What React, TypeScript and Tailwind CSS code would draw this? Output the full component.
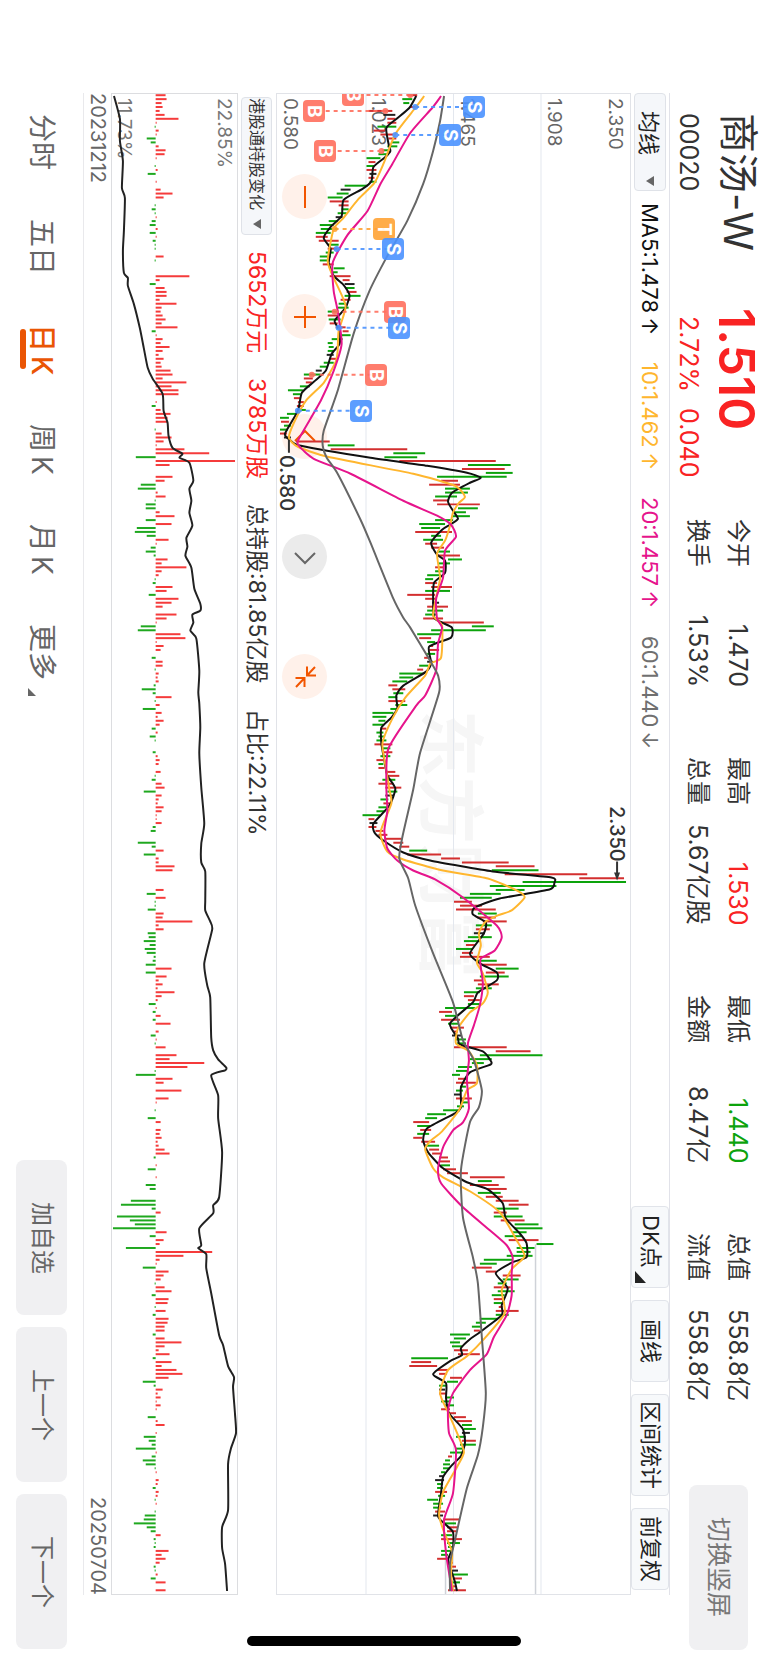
import React, { useState } from 'react';

// K线数据: 颜色 + 最低/最高
const candleData = `
r131,141 g126,136 g127,133 r134,142 r92,116 k107,119 r111,119 r111,120 g101,120 r97,109
r104,117 r112,120 g115,123 g111,121 g106,112 g102,111 g90,104 r92,99 g90,98 r90,100
k93,100 r92,98 g93,100 g68,91 k64,74 g60,72 g51,66 r53,72 r62,72 g65,72
g61,70 k59,66 g52,61 g43,57 g44,61 g39,54 r39,51 r42,62 g51,62 r51,61
g49,57 g43,54 g43,53 r46,57 g57,68 g54,61 r53,74 r66,73 k68,78 g69,78
r70,80 g68,84 r64,74 g62,69 g61,72 g51,62 r51,61 g52,64 r53,61 r59,69
r66,72 g64,74 g55,66 g51,56 g52,57 g51,57 k50,57 r53,61 g47,57 g43,51
k39,45 g27,44 r27,36 r29,35 g23,33 g11,26 g16,24 r17,23 r21,27 r20,27
g20,29 g10,19 g3,12 r4,12 g7,14 g3,11 r3,10 k7,14 r19,53 g51,78
r54,131 g117,149 g108,141 r123,220 g192,235 r186,229 g210,237 g161,231 r165,182 r153,184
g169,194 g169,192 g159,181 r157,172 r161,204 g182,202 g177,190 g176,194 g159,177 g143,169
g145,164 r139,176 g155,165 g147,167 r149,161 r155,168 g161,174 r162,184 g172,186 g162,174
r159,167 g159,167 g151,165 g149,157 r149,161 r155,176 g149,174 r131,159 r149,161 k156,163
r151,172 g151,167 g149,161 r147,167 r164,208 g196,218 g155,210 g141,165 r143,155 g151,159
r153,157 r153,163 g151,159 r148,154 k151,157 g143,152 r141,147 g123,147 g123,137 g116,131
r112,121 r116,129 g117,127 g112,121 r112,129 g119,131 g114,121 g96,117 g96,110 g102,109
g96,107 r104,110 g100,107 g102,108 g100,110 r98,116 g106,114 r107,116 g104,114 r100,107
g102,107 r102,108 r109,119 r110,123 g106,119 r102,117 r109,125 g111,121 k109,117 g104,112
r107,114 g102,111 g100,109 g86,104 r92,98 k93,101 r92,100 r99,107 r102,111 r108,125
r117,127 r123,133 g133,151 r131,165 r165,184 r186,233 r220,259 g216,263 r229,312 r304,349
g247,351 g214,281 g220,249 g194,225 g184,216 r178,196 r184,206 r180,220 g202,221 r201,220
r207,231 g200,216 r200,214 k198,209 g192,216 g188,204 r190,199 g180,197 r186,197 r184,214
g201,221 r206,231 g220,243 r210,229 g204,233 r198,207 r202,223 g200,216 g188,204 r188,198
r192,204 g192,204 g169,199 r163,176 g169,181 r165,184 g172,182 r174,188 r177,182 k176,186
g179,190 g181,190 r178,231 r220,255 g204,267 g194,216 g196,208 g182,196 g180,192 g176,184
r182,191 r180,200 g184,190 g180,187 k178,185 r180,196 g184,192 g181,188 g167,184 g151,170
g149,161 r137,153 g141,154 r144,155 g141,153 r137,146 r145,159 g149,163 r153,163 r156,165
r163,172 r163,174 g165,174 r167,180 r171,192 r194,229 g202,216 r194,223 r211,231 g202,225
r210,227 r220,243 r233,253 g220,243 r218,231 g218,247 r225,249 g239,263 g239,267 g237,251
g229,246 r233,263 g261,278 g241,259 g241,255 g231,257 g208,237 g204,221 r196,216 r210,221
r227,245 g227,243 g222,231 r218,235 g222,239 g216,229 r218,227 g218,229 r223,227 r220,243
g220,233 g204,222 g200,210 g196,206 r198,204 g174,194 g178,190 g174,184 g176,186 r178,192
r182,204 g135,172 r135,155 r133,161 r161,172 r163,171 r174,186 g171,182 g163,171 k163,169
r163,171 g169,178 g165,174 g169,178 r165,174 r171,180 r178,190 r181,196 g186,196 g188,200
k186,194 g180,190 r186,200 g184,200 g180,187 g174,186 r172,176 g169,174 g167,174 g167,174
g165,169 k163,168 k159,168 g161,167 g161,167 r159,171 g162,169 g151,162 g157,167 g157,165
r159,169 k157,167 r167,184 g169,180 r171,182 r171,180 g165,176 r165,186 g171,184 g172,178
g165,176 g165,172 r161,172 r172,177 r174,180 k176,182 g176,192 r177,186 g176,184 r176,179
r172,190`;

const candles = candleData.trim().split(/\s+/).map((item) => {
  const [low, high] = item.slice(1).split(',').map(Number);
  return { color: item[0], low, high };
});

// 港股通每日持股变化
const flows = [
  10, 11, 6, 7, 4, 9, 23, 1, -1, 3, 1, -9, -5, 3, 10, 9, 1, 0, -1, 2,
  -8, 0, 1, 0, 5, 17, 8, 0, -1, -4, -1, 1, -4, -6, 2, -6, 1, -3, -1, -1,
  0, 8, -1, 0, 0, 0, 34, 4, -6, 9, 11, 11, 4, 21, 6, 5, 7, 10, 6, 22,
  -4, 1, 7, 5, 14, 7, 3, 8, 5, 6, 15, 17, 7, 31, 16, 23, 23, 0, 1, -4,
  5, 15, 12, 12, 0, -1, 6, 16, 8, 1, 29, 54, -20, 80, 14, 0, 0, 17, 9, -15,
  -18, 2, 10, -1, -10, -10, 4, 19, -10, 16, -19, -21, -9, 13, 1, -5, -10, -2, 12,
  6, 31, 6, 3, -1, -3, 17, 11, -7, 23, 16, 7, 0, 21, 11, 1, -15, -18, 25, 30,
  1, 8, 5, 0, -4, 7, 7, -1, 3, 2, 3, -2, -14, -3, 16, -1, 4, -13, 6, 2,
  8, 4, -4, 2, -6, -1, 0, 0, -3, 2, 4, 3, 0, 5, -1, -4, 6, 9, -12, 6,
  3, 2, 8, 6, 1, 1, 6, -3, -5, 0, 0, -18, -4, 8, -12, 3, 3, 19, 17, 0,
  0, 0, 0, 8, -9, 10, -1, -1, -8, 8, 7, 37, 3, 8, -8, -7, -12, -6, -11, -9,
  -2, -3, -10, 16, -10, 11, 3, 7, 2, 19, 6, 2, -7, 1, -3, 5, -3, 15, 0,
  3, -5, 1, -1, 10, 0, 21, 14, 49, 32, -1, -20, 17, 8, 0, 26, 0, 13, 1, 0,
  -1, 0, -8, 5, 0, 5, 4, 6, 2, 3, 9, 14, -2, 0, 1, -8, 0, 1, 0, -10,
  -6, 0, 0, -25, -35, -4, 5, -39, -26, -21, -43, 11, -6, 8, 4, -30, 57, 28, 4, 1,
  -13, 13, 8, 5, -1, 9, 16, -4, 13, 12, -1, 10, -3, 13, 12, 9, 9, -3, 9, 26,
  9, 3, 14, -3, 16, 6, 21, 27, 13, -13, -2, 7, 2, 5, 1, 5, 1, 0, -8, 2,
  9, 0, 1, -12, -7, -4, -20, 1, -4, -13, -10, -1, 1, 0, 3, 2, -3, 3, 2, -1,
  1, 0, -1, -11, -12, -22, -9, -5, 5, -2, -1, -2, 13, 6, 10, 4, -2, -1, 2, -5,
  10, 0, 10,
];

const ma5 = '140,2 133,14 120,25 110,34 112,49 114,57 109,63 97,73 95,87 86,95 67,106 65,122 54,133 47,144 54,155 52,169 57,182 66,190 71,197 73,202 69,214 58,227 63,237 63,250 55,260 49,277 37,288 25,299 21,317 8,340 14,347 24,352 94,364 151,372 191,379 205,384 194,389 176,399 172,408 177,417 182,425 174,431 166,436 155,449 161,461 169,467 169,479 158,489 157,505 158,524 166,529 176,534 175,544 153,553 155,569 150,578 127,592 120,602 121,615 115,624 105,634 105,650 108,667 111,682 119,695 113,712 97,730 98,739 107,747 127,759 154,767 217,778 276,784 279,789 274,796 224,805 199,814 197,821 210,829 208,840 194,860 204,870 221,879 221,887 202,899 197,909 174,930 182,945 184,951 207,958 214,966 215,971 194,979 185,994 185,1014 179,1020 151,1035 147,1047 152,1059 167,1075 191,1089 212,1096 227,1110 230,1125 244,1140 251,1150 251,1164 237,1169 220,1180 232,1195 226,1212 226,1222 204,1239 194,1246 185,1255 186,1262 174,1268 157,1281 170,1290 170,1305 173,1320 187,1336 189,1350 185,1363 176,1372 167,1384 165,1400 162,1423 169,1431 177,1439 177,1454 172,1467 176,1480 179,1489 181,1498';
const ma10 = '148,2 139,14 119,40 107,70 98,89 82,105 66,125 57,135 51,167 57,184 69,212 62,237 61,257 59,268 47,289 29,307 17,329 12,344 21,353 51,363 137,380 179,392 189,403 183,409 177,419 174,432 169,447 161,460 164,484 160,504 157,522 166,532 165,564 154,570 149,582 129,604 116,625 106,650 110,677 113,696 115,710 104,739 111,758 127,766 167,777 212,785 241,797 249,804 236,817 222,822 209,829 203,840 205,852 201,869 207,880 212,899 207,910 194,919 182,935 180,950 193,958 201,972 201,990 191,997 183,1017 166,1038 154,1048 149,1056 157,1075 167,1084 194,1098 224,1119 241,1147 249,1163 236,1176 226,1197 229,1220 209,1245 191,1263 172,1277 164,1300 172,1319 182,1342 188,1359 181,1374 167,1399 163,1422 168,1439 176,1459 175,1480 177,1498';
const ma20 = '165,2 156,14 134,39 116,70 104,90 91,117 71,141 56,169 57,197 61,217 65,250 57,277 44,307 22,345 22,352 37,365 74,380 127,407 161,422 175,431 180,443 169,457 167,484 160,505 161,525 166,534 162,550 160,577 149,602 140,612 112,655 110,694 111,717 108,737 111,755 121,767 137,777 159,786 187,804 221,832 226,844 219,857 205,865 205,874 207,890 204,912 198,932 192,950 193,967 191,987 193,1015 187,1029 177,1037 167,1054 162,1075 165,1090 187,1114 214,1137 231,1152 237,1164 236,1180 236,1202 231,1222 218,1244 211,1261 194,1277 177,1300 172,1317 173,1340 180,1357 177,1400 168,1427 170,1460 176,1498';
const ma60 = '168,2 164,27 157,57 147,90 131,127 111,162 93,197 77,240 61,297 47,337 46,352 50,364 61,380 84,426 94,449 117,505 127,524 134,534 154,567 162,582 163,599 144,659 137,696 126,744 123,765 132,785 139,812 157,860 177,909 187,947 198,967 206,997 203,1014 194,1029 185,1077 187,1124 197,1164 202,1190 206,1244 210,1300 207,1334 202,1362 191,1395 179,1447 174,1470 174,1498';
const holding = '2,2 8,25 8,47 11,67 10,94 13,104 12,137 11,157 12,179 16,184 16,192 22,210 28,234 32,254 36,274 41,285 51,300 52,317 56,329 57,342 61,354 71,360 68,364 78,369 82,387 78,395 80,407 78,419 81,432 75,444 76,453 74,462 80,474 83,495 89,510 89,517 81,521 82,529 79,537 85,545 88,577 87,599 88,610 89,634 88,660 90,694 93,730 90,750 90,769 94,778 94,807 94,817 99,828 101,836 93,870 96,892 99,904 100,944 102,957 107,966 115,974 114,977 100,982 107,1002 107,1025 111,1059 108,1104 102,1112 102,1120 88,1135 90,1152 87,1155 95,1161 95,1175 100,1200 108,1242 112,1252 117,1273 123,1284 122,1294 124,1321 125,1340 120,1355 117,1371 117,1417 111,1434 111,1455 114,1471 116,1498';

const STEP = 3.937;
const CHART_W = 355;
const CHART_H = 1501;
const candleColors: Record<string, string> = { r: '#d32f2f', g: '#0ca30c', k: '#222222' };

// 平滑曲线
function smooth(points: string) {
  const p = points.split(' ').map((s) => s.split(',').map(Number));
  let d = `M${p[0][0]} ${p[0][1]}`;
  for (let i = 0; i < p.length - 1; i++) {
    const a = p[i - 1] || p[i];
    const b = p[i];
    const c = p[i + 1];
    const e = p[i + 2] || c;
    d += `C${b[0] + (c[0] - a[0]) / 10} ${b[1] + (c[1] - a[1]) / 10} ${c[0] - (e[0] - b[0]) / 10} ${c[1] - (e[1] - b[1]) / 10} ${c[0]} ${c[1]}`;
  }
  return d;
}

const axisLabels = [
  { text: '2.350', x: 330 },
  { text: '1.908', x: 269 },
  { text: '1.465', x: 181 },
  { text: '1.023', x: 92 },
  { text: '0.580', x: 3 },
];

const markers = [
  { type: 'B', x: 76, y: 1, dot: 134 },
  { type: 'S', x: 198, y: 13, dot: 139 },
  { type: 'B', x: 37, y: 17, dot: 109 },
  { type: 'S', x: 174, y: 41, dot: 119 },
  { type: 'B', x: 48, y: 57, dot: 105 },
  { type: 'T', x: 108, y: 135, dot: 58 },
  { type: 'S', x: 117, y: 155, dot: 60 },
  { type: 'B', x: 119, y: 218, dot: 58 },
  { type: 'S', x: 123, y: 234, dot: 62 },
  { type: 'B', x: 100, y: 281, dot: 35 },
  { type: 'S', x: 84, y: 317, dot: 21 },
];
const markerColors: Record<string, string> = { B: '#ff6f5e', S: '#4b93ff', T: '#ffa436' };

const quotes = [
  [
    { label: '今开', value: '1.470', color: 'text-[#333333]' },
    { label: '换手', value: '1.53%', color: 'text-[#333333]' },
  ],
  [
    { label: '最高', value: '1.530', color: 'text-[#f92323]' },
    { label: '总量', value: '5.67亿股', color: 'text-[#333333]' },
  ],
  [
    { label: '最低', value: '1.440', color: 'text-[#0ca30c]' },
    { label: '金额', value: '8.47亿', color: 'text-[#333333]' },
  ],
  [
    { label: '总值', value: '558.8亿', color: 'text-[#333333]' },
    { label: '流值', value: '558.8亿', color: 'text-[#333333]' },
  ],
];

const averages = [
  { text: 'MA5:1.478', arrow: '↑', color: 'text-[#111111]' },
  { text: '10:1.462', arrow: '↑', color: 'text-[#ffb62e]' },
  { text: '20:1.457', arrow: '↑', color: 'text-[#e6148c]' },
  { text: '60:1.440', arrow: '↓', color: 'text-[#707070]' },
];

const tabs = [
  { name: '分时', unit: '' },
  { name: '五日', unit: '' },
  { name: '日', unit: 'K' },
  { name: '周', unit: 'K' },
  { name: '月', unit: 'K' },
  { name: '更多', unit: '' },
];

function Header() {
  return (
    <header className="flex w-[98px] items-start pt-[113px] pb-[13px] text-[#333333]">
      <div className="flex h-[195px] flex-col gap-[14px] pr-[10px]">
        <h1 className="whitespace-nowrap text-[40px] leading-[40px]">商汤-W</h1>
        <p className="text-[25px] leading-[30px]">00020</p>
      </div>
      <div className="flex h-[211px] flex-col gap-[6px] pr-[4px] text-[#f92323]">
        <p className="text-[50px] font-semibold leading-[54px]">1.510</p>
        <div className="flex gap-[16px] whitespace-nowrap pt-[8px] text-[25px] leading-[30px]">
          <span>2.72%</span>
          <span>0.040</span>
        </div>
      </div>
      <dl className="flex gap-[70px] pr-[15px]">
        {quotes.map((column) => (
          <div key={column[0].label} className="flex h-[168px] flex-col gap-[10px]">
            {column.map((quote) => (
              <div key={quote.label} className="flex justify-between whitespace-nowrap leading-[30px]">
                <dt className="text-[24px]">{quote.label}</dt>
                <dd className={`text-[25px] ${quote.color}`}>{quote.value}</dd>
              </div>
            ))}
          </div>
        ))}
      </dl>
      <button className="mt-auto mr-[20px] h-[165px] w-[59px] rounded-lg bg-[#f0f0f2] text-[25px] text-[#777777]">
        切换竖屏
      </button>
    </header>
  );
}

function Toolbar() {
  const toolClass = 'flex h-[82px] items-center justify-center rounded border border-[#e1e4ea] bg-[#f7f9fb]';
  return (
    <div className="flex w-[39px] border-r border-[#e1e2e9] text-[22px] text-[#222222]">
      <div className="relative mr-[3px] flex h-[98px] w-[32px]">
        <select
          aria-label="指标"
          className="block h-full w-full appearance-none rounded border border-[#dfe2e8] bg-[#f5f7fa] pt-[17px] [text-orientation:sideways]"
        >
          <option>均线</option>
        </select>
        <svg className="pointer-events-none absolute bottom-[5px] left-[12px] h-[10px] w-[8px]" viewBox="0 0 8 10">
          <path d="M8 0V10L0 5Z" fill="#666666" />
        </svg>
      </div>
      <div className="flex gap-[27px] pt-[12px] leading-[38px]">
        {averages.map((item) => (
          <span key={item.text} className={`flex gap-[4px] whitespace-nowrap ${item.color}`}>
            {item.text}
            <span>{item.arrow}</span>
          </span>
        ))}
      </div>
      <div className="mt-auto flex gap-[12px] pb-[5px]">
        <button className={`${toolClass} relative pb-[12px]`}>
          DK点
          <svg className="absolute bottom-[4px] left-[3px] h-[12px] w-[11px]" viewBox="0 0 11 12">
            <path d="M0 0L11 12H0Z" fill="#222222" />
          </svg>
        </button>
        <button className={toolClass}>画线</button>
        <button className="h-[102px] rounded border border-[#e1e4ea] bg-[#f7f9fb]">区间统计</button>
        <button className={toolClass}>前复权</button>
      </div>
    </div>
  );
}

function ChartControls() {
  const round = 'flex h-[45px] w-[45px] items-center justify-center rounded-full bg-[#fff1ea] text-[#f25500]';
  return (
    <div className="absolute left-[5px] top-[80px] flex gap-[75px]">
      <button aria-label="缩小" className={round}>
        <svg className="h-6 w-6" viewBox="0 0 24 24" fill="none" stroke="currentColor" strokeWidth="2">
          <path d="M12 1V23" />
        </svg>
      </button>
      <button aria-label="放大" className={round}>
        <svg className="h-6 w-6" viewBox="0 0 24 24" fill="none" stroke="currentColor" strokeWidth="2">
          <path d="M12 1V23M1 12H23" />
        </svg>
      </button>
      <button aria-label="左移" className={round}>
        <svg className="h-6 w-6" viewBox="0 0 24 24" fill="none" stroke="currentColor" strokeWidth="2">
          <path d="M2 16L12 6L22 16" />
        </svg>
      </button>
      <button aria-label="右移" className="flex h-[45px] w-[45px] items-center justify-center rounded-full bg-[#ebebeb] text-[#666666]">
        <svg className="h-6 w-6" viewBox="0 0 24 24" fill="none" stroke="currentColor" strokeWidth="2">
          <path d="M2 8L12 18L22 8" />
        </svg>
      </button>
      <button aria-label="收起" className={round}>
        <svg className="h-6 w-6" viewBox="0 0 24 24" fill="none" stroke="currentColor" strokeWidth="2">
          <path d="M14 1.500V10.500H23M14 10.500L22 2M11.500 22V13H2.500M11.500 13L3 22" />
        </svg>
      </button>
    </div>
  );
}

function PriceChart() {
  return (
    <div className="relative min-w-0 flex-1 overflow-hidden border border-[#e1e3e8]">
      <span className="absolute left-[138px] top-[616px] whitespace-nowrap text-[67px] font-bold leading-[70px] text-[#f6f6f6]">
        东方财富
      </span>
      <ChartControls />
      <svg
        className="pointer-events-none absolute inset-0 h-full w-full"
        viewBox={`0 0 ${CHART_W} ${CHART_H}`}
        preserveAspectRatio="none"
        fill="none"
      >
        <path d="M89.500 0V1501M177.500 0V1501M265.500 0V1501" stroke="#e3e7ee" />
        <path d="M260 1151V1501M169.500 1460V1501" stroke="#cfd2d8" strokeWidth="1.500" />
      </svg>
      {axisLabels.map((label) => (
        <span
          key={label.text}
          className="absolute top-[4px] text-[19px] leading-[20px] text-[#666666]"
          style={{ left: `${(label.x / CHART_W) * 100}%` }}
        >
          {label.text}
        </span>
      ))}
      <svg
        className="pointer-events-none absolute inset-0 h-full w-full"
        viewBox={`0 0 ${CHART_W} ${CHART_H}`}
        preserveAspectRatio="none"
        fill="none"
      >
        {candles.map((candle, i) => (
          <path
            key={i}
            d={`M${candle.low} ${1.2 + i * STEP}H${candle.high}`}
            stroke={candleColors[candle.color]}
            strokeWidth="2"
          />
        ))}
        <path d={smooth(ma5)} stroke="#111111" strokeWidth="2" />
        <path d={smooth(ma10)} stroke="#ffb62e" strokeWidth="2" />
        <path d={smooth(ma20)} stroke="#e6148c" strokeWidth="2" />
        <path d={smooth(ma60)} stroke="#666666" strokeWidth="2" />
        {markers.map((marker, i) => (
          <g key={i} opacity="0.9">
            <path
              d={`M${marker.dot} ${marker.y}H${marker.x}`}
              stroke={markerColors[marker.type]}
              strokeWidth="2"
              strokeDasharray="4 4"
            />
            <circle cx={marker.dot} cy={marker.y} r="3" fill={markerColors[marker.type]} />
          </g>
        ))}
        <path d="M12 346V359M342 768V780" stroke="#333333" strokeWidth="2" />
        <path d="M339 779H345L342 787Z" fill="#333333" />
      </svg>
      {markers.map((marker, i) => (
        <span
          key={i}
          className="absolute flex h-[22px] w-[22px] -translate-x-1/2 -translate-y-1/2 items-center justify-center rounded text-[19px] font-bold leading-[22px] text-white opacity-90"
          style={{
            left: `${(marker.x / CHART_W) * 100}%`,
            top: `${(marker.y / CHART_H) * 100}%`,
            backgroundColor: markerColors[marker.type],
          }}
        >
          {marker.type}
        </span>
      ))}
      <span className="absolute left-0 top-[361px] text-[20px] font-medium leading-[20px] text-[#333333]">0.580</span>
      <span className="absolute left-[330px] top-[712px] text-[20px] font-medium leading-[20px] text-[#333333]">2.350</span>
    </div>
  );
}

function HoldingBar() {
  return (
    <div className="flex w-[38px] text-[23px] leading-[38px] text-[#333333]">
      <div className="relative mt-[4px] mr-[4px] h-[138px] w-[31px]">
        <select
          aria-label="副图指标"
          className="block h-full w-full appearance-none rounded border border-[#dfe2e8] bg-[#f5f7fa] text-[16px] leading-[28px] [text-orientation:sideways]"
        >
          <option>港股通持股变化</option>
        </select>
        <svg className="pointer-events-none absolute bottom-[6px] left-[12px] h-[10px] w-[8px]" viewBox="0 0 8 10">
          <path d="M8 0V10L0 5Z" fill="#666666" />
        </svg>
      </div>
      <div className="flex gap-[25px] whitespace-nowrap pt-[16px]">
        <span className="text-[#f92323]">5652万元</span>
        <span className="text-[#f92323]">3785万股</span>
        <span>总持股:81.85亿股</span>
        <span>占比:22.11%</span>
      </div>
    </div>
  );
}

function HoldingChart() {
  return (
    <div className="relative w-[127px] overflow-hidden border border-[#dcdde0]">
      <span className="absolute left-[102px] top-[4px] text-[19px] leading-[20px] text-[#777777]">22.85%</span>
      <span className="absolute left-[2px] top-[4px] text-[19px] leading-[20px] text-[#777777]">11.73%</span>
      <svg
        className="absolute inset-0 h-full w-full"
        viewBox={`0 0 126 ${CHART_H}`}
        preserveAspectRatio="none"
        fill="none"
      >
        {flows.map((value, i) => (
          <path
            key={i}
            d={`M44 ${1.2 + i * STEP}h${value}`}
            stroke={value > 0 ? '#f53b3b' : '#1fa81f'}
            strokeWidth="2"
          />
        ))}
        <path d={smooth(holding)} stroke="#222222" strokeWidth="2" />
      </svg>
    </div>
  );
}

function Footer({ active, onChange }: { active: string; onChange: (tab: string) => void }) {
  return (
    <footer className="flex w-[83px] items-center pt-[114px] pb-[14px]">
      <nav className="flex gap-[49px] text-[28px] leading-[40px] text-[#666666]">
        {tabs.map((tab) => (
          <button
            key={tab.name}
            onClick={() => onChange(tab.name)}
            className={`relative whitespace-nowrap ${active === tab.name ? 'font-medium text-[#ea5504]' : ''}`}
          >
            {tab.name}
            {tab.unit && <span className="pt-[4px]">{tab.unit}</span>}
            {active === tab.name && (
              <span className="absolute left-[-2px] top-[5px] h-[40px] w-[6px] rounded-full bg-[#ea5504]" />
            )}
            {tab.name === '更多' && (
              <svg className="absolute bottom-[-16px] left-[6px] h-[8px] w-[8px]" viewBox="0 0 7 7">
                <path d="M0 0L7 7H0Z" fill="#666666" />
              </svg>
            )}
          </button>
        ))}
      </nav>
      <div className="mt-auto flex gap-[12px] text-[24px] text-[#666666]">
        <button className="h-[155px] w-[51px] rounded-lg bg-[#f0f0f2]">加自选</button>
        <button className="h-[155px] w-[51px] rounded-lg bg-[#f0f0f2]">上一个</button>
        <button className="h-[155px] w-[51px] rounded-lg bg-[#f0f0f2]">下一个</button>
      </div>
    </footer>
  );
}

export default function App() {
  const [active, setActive] = useState('日');

  return (
    <div className="relative flex h-screen w-full flex-col overflow-hidden bg-white font-['Inter','Noto_Sans_CJK_SC',sans-serif] [text-orientation:sideways] [writing-mode:vertical-rl]">
      <Header />

      <main className="mt-[93px] mb-[68px] flex min-w-0 flex-1 flex-col">
        <Toolbar />
        <PriceChart />
        <HoldingBar />
        <HoldingChart />
        <div className="flex w-[28px] justify-between border-l border-[#e9e9ec] text-[20px] leading-[26px] text-[#666666]">
          <span>20231212</span>
          <span>20250704</span>
        </div>
      </main>

      <Footer active={active} onChange={setActive} />

      {/* Home indicator */}
      <div className="absolute bottom-[17px] left-1/2 h-[10px] w-[274px] -translate-x-1/2 rounded-full bg-black" />
    </div>
  );
}
